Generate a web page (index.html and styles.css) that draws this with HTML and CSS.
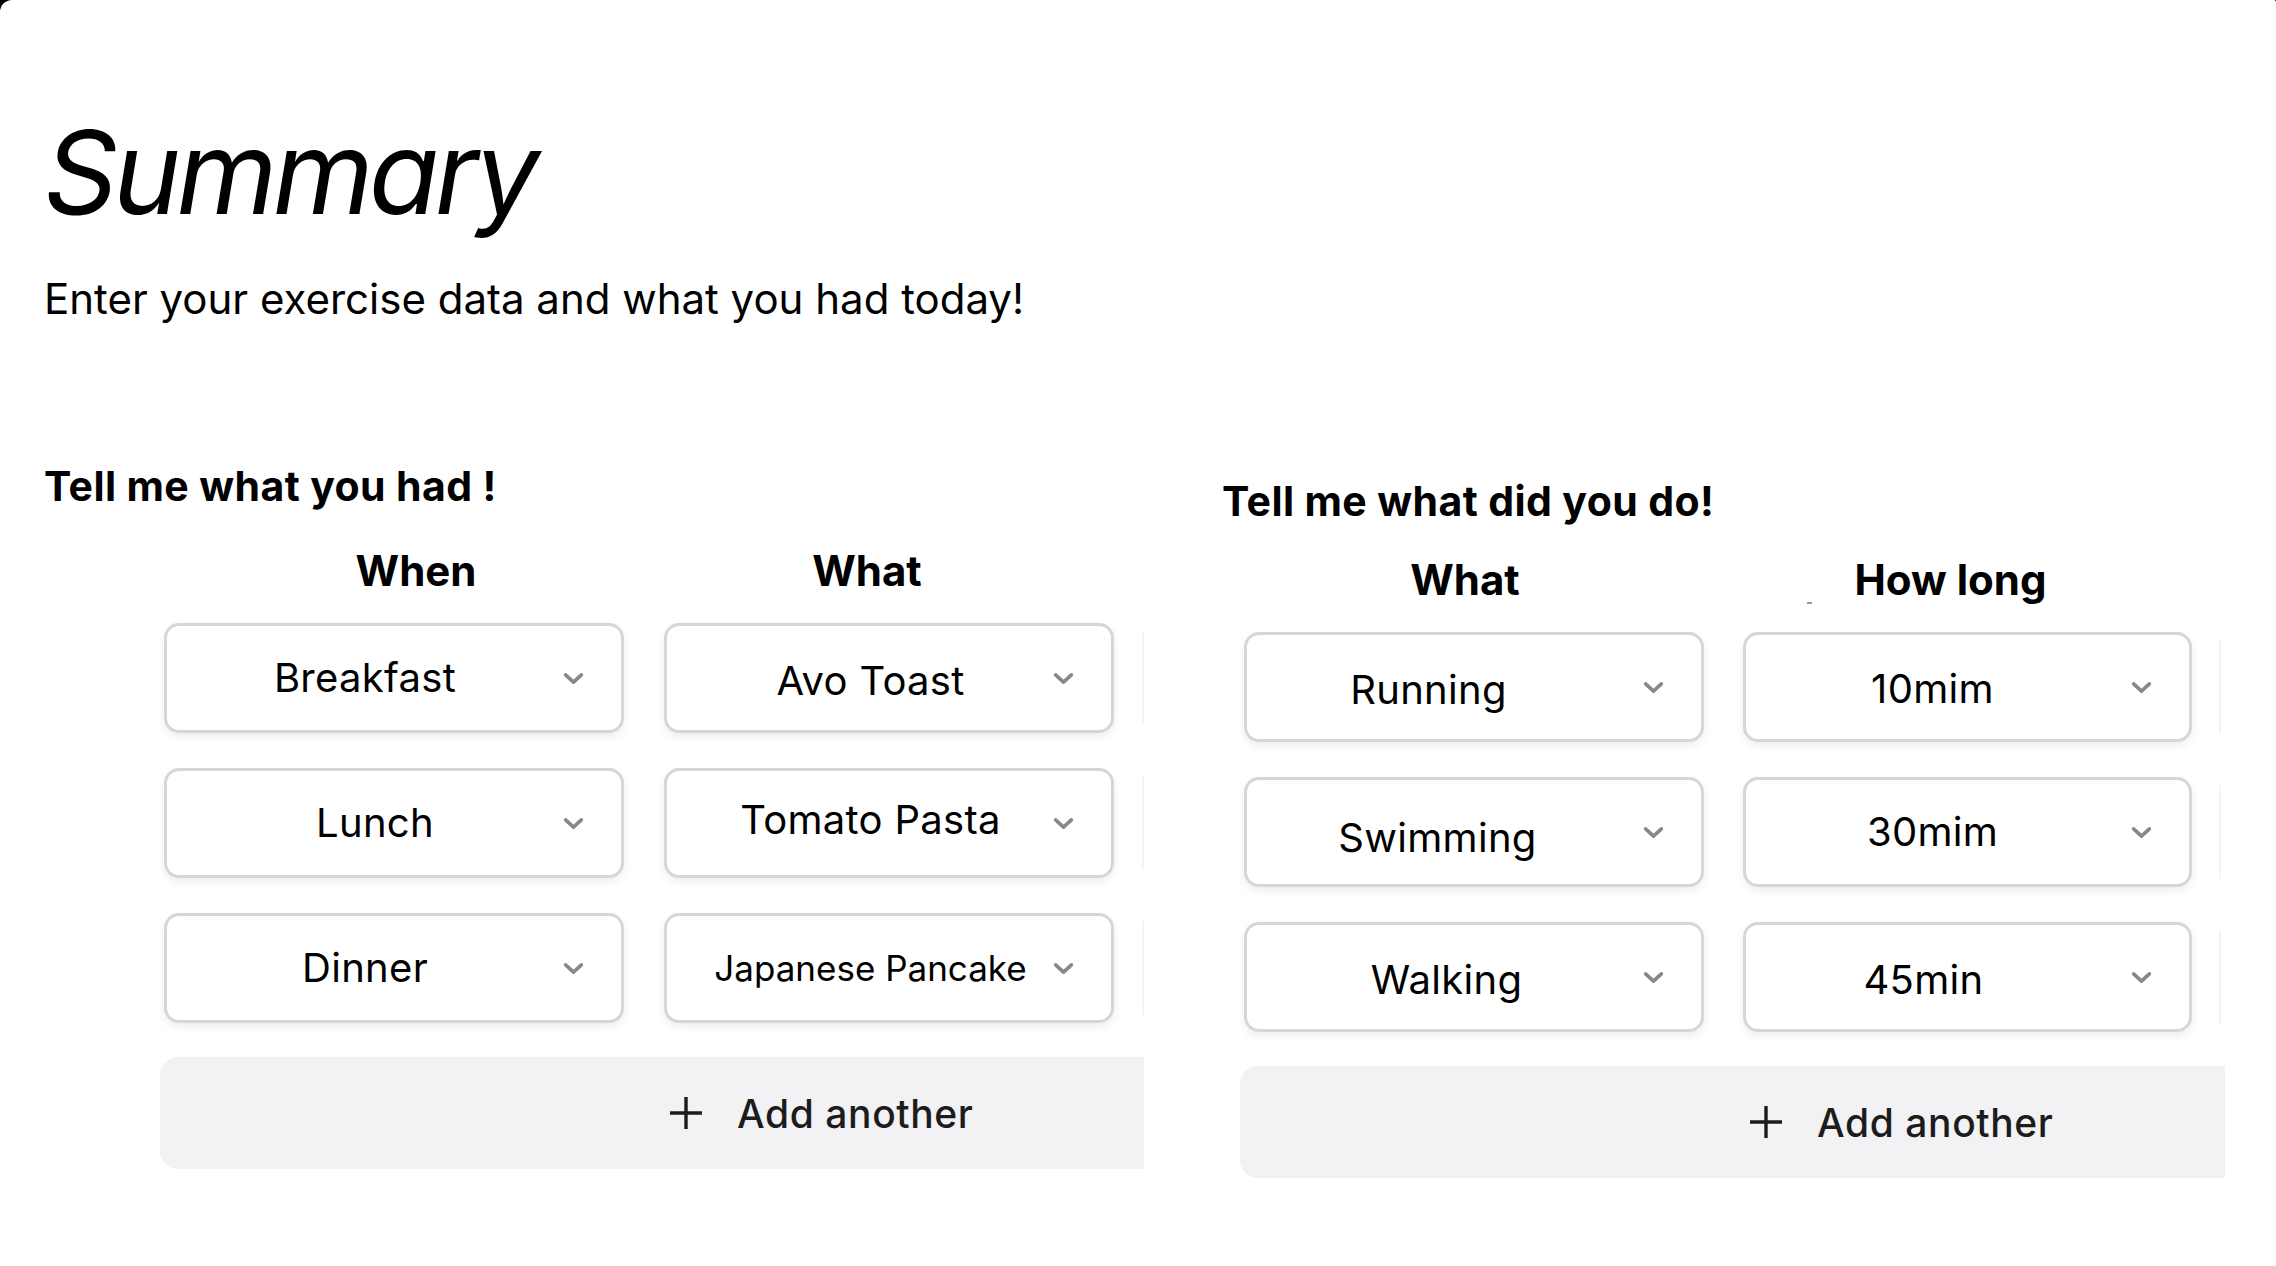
FILE: index.html
```html
<!DOCTYPE html>
<html lang="en">
<head>
<meta charset="utf-8">
<title>Summary</title>
<link rel="stylesheet" href="styles.css">
</head>
<body>
<div class="screen">
  <header class="intro">
    <h1 class="intro__title">Summary</h1>
    <p class="intro__lead">Enter your exercise data and what you had today!</p>
  </header>

  <div class="panels">
    <section class="panel panel--food">
      <h2 class="panel__title">Tell me what you had !</h2>
      <div class="table">
        <div class="table__head">
          <div class="col-head col-head--when">When</div>
          <div class="col-head col-head--fwhat">What</div>
        </div>
        <div class="row">
          <div class="sel sel--when"><span class="sel__text">Breakfast</span><svg class="chev" viewBox="0 0 20 12"><path d="M2.5 2.5 L10 9.5 L17.5 2.5"/></svg></div>
          <div class="sel sel--fwhat"><span class="sel__text sel__text--low">Avo Toast</span><svg class="chev" viewBox="0 0 20 12"><path d="M2.5 2.5 L10 9.5 L17.5 2.5"/></svg></div>
          <div class="row__edge"></div>
        </div>
        <div class="row">
          <div class="sel sel--when"><span class="sel__text sel__text--right">Lunch</span><svg class="chev" viewBox="0 0 20 12"><path d="M2.5 2.5 L10 9.5 L17.5 2.5"/></svg></div>
          <div class="sel sel--fwhat"><span class="sel__text sel__text--high">Tomato Pasta</span><svg class="chev" viewBox="0 0 20 12"><path d="M2.5 2.5 L10 9.5 L17.5 2.5"/></svg></div>
          <div class="row__edge"></div>
        </div>
        <div class="row">
          <div class="sel sel--when"><span class="sel__text">Dinner</span><svg class="chev" viewBox="0 0 20 12"><path d="M2.5 2.5 L10 9.5 L17.5 2.5"/></svg></div>
          <div class="sel sel--fwhat"><span class="sel__text sel__text--small">Japanese Pancake</span><svg class="chev" viewBox="0 0 20 12"><path d="M2.5 2.5 L10 9.5 L17.5 2.5"/></svg></div>
          <div class="row__edge"></div>
        </div>
      </div>
      <button class="add add--food" type="button">
        <svg class="add__plus" viewBox="0 0 36 36"><path d="M18 2 V34 M2 18 H34"/></svg>
        <span>Add another</span>
      </button>
    </section>

    <section class="panel panel--ex">
      <h2 class="panel__title">Tell me what did you do!</h2>
      <div class="table">
        <div class="table__head">
          <div class="col-head col-head--ewhat">What</div>
          <div class="col-head col-head--long"><span class="tick"></span>How long</div>
        </div>
        <div class="row">
          <div class="sel sel--ewhat"><span class="sel__text sel__text--low sel__text--l10">Running</span><svg class="chev" viewBox="0 0 20 12"><path d="M2.5 2.5 L10 9.5 L17.5 2.5"/></svg></div>
          <div class="sel sel--long"><span class="sel__text sel__text--low2">10mim</span><svg class="chev" viewBox="0 0 20 12"><path d="M2.5 2.5 L10 9.5 L17.5 2.5"/></svg></div>
          <div class="row__edge"></div>
        </div>
        <div class="row">
          <div class="sel sel--ewhat"><span class="sel__text sel__text--lower">Swimming</span><svg class="chev" viewBox="0 0 20 12"><path d="M2.5 2.5 L10 9.5 L17.5 2.5"/></svg></div>
          <div class="sel sel--long"><span class="sel__text">30mim</span><svg class="chev" viewBox="0 0 20 12"><path d="M2.5 2.5 L10 9.5 L17.5 2.5"/></svg></div>
          <div class="row__edge"></div>
        </div>
        <div class="row">
          <div class="sel sel--ewhat"><span class="sel__text sel__text--low sel__text--r10">Walking</span><svg class="chev" viewBox="0 0 20 12"><path d="M2.5 2.5 L10 9.5 L17.5 2.5"/></svg></div>
          <div class="sel sel--long"><span class="sel__text sel__text--low sel__text--l10">45min</span><svg class="chev" viewBox="0 0 20 12"><path d="M2.5 2.5 L10 9.5 L17.5 2.5"/></svg></div>
          <div class="row__edge"></div>
        </div>
      </div>
      <button class="add add--ex" type="button">
        <svg class="add__plus" viewBox="0 0 36 36"><path d="M18 2 V34 M2 18 H34"/></svg>
        <span>Add another</span>
      </button>
    </section>
  </div>
</div>
</body>
</html>
```

FILE: styles.css
```css
* { box-sizing: border-box; }

html {
  background: #000;
}

body {
  margin: 0;
  font-family: Inter, "Noto Sans", "Liberation Sans", sans-serif;
  color: #000;
}

.screen {
  background: #fff;
  min-height: 1266px;
  border-top-left-radius: 12px;
  border-top-right-radius: 2px;
  overflow: hidden;
}

.intro {
  padding-left: 44px;
}

.intro__title {
  margin: 115px 0 0;
  font-size: 115px;
  line-height: 115px;
  font-weight: 400;
  font-style: italic;
  letter-spacing: -4.6px;
}

.intro__lead {
  margin: 48px 0 0;
  font-size: 42px;
  line-height: 42px;
  font-weight: 400;
}

.panels {
  display: flex;
  gap: 78px;
  padding-left: 44px;
}

.panel--food { width: 1100px; padding-top: 146px; }
.panel--ex { width: 1007px; padding-top: 161px; }

.panel__title {
  margin: 0;
  font-size: 41px;
  line-height: 40px;
  font-weight: 700;
  letter-spacing: 0.4px;
}

.panel--food .table { padding-left: 120px; margin-top: 45px; }
.panel--ex .table { padding-left: 22px; margin-top: 39px; }

.table__head {
  display: flex;
  gap: 40px;
  margin-bottom: 32px;
}

.col-head {
  font-size: 42px;
  line-height: 40px;
  font-weight: 700;
  text-align: center;
  letter-spacing: 0;
}

.col-head--when { width: 460px; padding-left: 44px; }
.col-head--fwhat { width: 450px; padding-right: 44px; }
.col-head--ewhat { width: 460px; padding-right: 18px; }
.col-head--long { width: 449px; padding-right: 34px; position: relative; }

.panel--ex .table__head { gap: 39px; }
.panel--ex .row { gap: 39px; }

.tick {
  position: absolute;
  left: 64px;
  top: 42px;
  width: 5px;
  height: 2px;
  background: #9a9a9a;
}

.row {
  display: flex;
  align-items: center;
  gap: 40px;
  margin-bottom: 35px;
}

.row:last-child { margin-bottom: 0; }

.sel {
  height: 110px;
  display: flex;
  align-items: center;
  border: 3px solid #d6d6d6;
  border-radius: 15px;
  background: #fff;
  box-shadow: 0 4px 8px rgba(0, 0, 0, 0.07);
  padding-right: 37px;
}

.sel--when { width: 460px; padding-left: 0; }
.sel--fwhat { width: 450px; padding-left: 21px; }
.sel--ewhat { width: 460px; }
.sel--long { width: 449px; }

.sel--ewhat .sel__text { margin-right: 15px; }
.sel--long .sel__text { margin-right: 12px; }

.sel__text {
  flex: 1;
  text-align: center;
  font-size: 40px;
  line-height: 48px;
  font-weight: 400;
  letter-spacing: 0.3px;
}

.sel__text--small { font-size: 35px; letter-spacing: 0; }
.sel__text--low { padding-top: 6px; }
.sel__text--low2 { padding-top: 3px; }
.sel__text--lower { padding-top: 12px; }
.sel__text--high { padding-bottom: 6px; }
.sel__text--right { padding-left: 20px; }
.sel__text--l10 { padding-right: 18px; }
.sel__text--r10 { padding-left: 18px; }

.chev {
  width: 21px;
  height: 13px;
  flex: none;
}

.chev path {
  fill: none;
  stroke: #888;
  stroke-width: 3.4;
  stroke-linecap: round;
  stroke-linejoin: round;
}

.row__edge {
  width: 2px;
  height: 94px;
  background: #f4f4f4;
  margin-left: -12px;
}

.add {
  display: flex;
  align-items: center;
  gap: 33px;
  height: 112px;
  border: 0;
  background: #f2f2f4;
  border-radius: 18px 0 0 18px;
  font-family: inherit;
  color: #1c1c1c;
  cursor: pointer;
  padding: 0 0 0 508px;
}

.add--food { width: 984px; margin: 34px 0 0 116px; }
.add--ex { width: 985px; margin: 34px 0 0 18px; }

.add__plus {
  width: 36px;
  height: 36px;
  flex: none;
}

.add__plus path {
  fill: none;
  stroke: #1c1c1c;
  stroke-width: 3.4;
}

.add span {
  font-size: 39px;
  font-weight: 500;
  letter-spacing: 0.6px;
}
```
